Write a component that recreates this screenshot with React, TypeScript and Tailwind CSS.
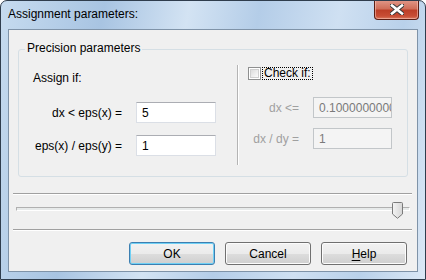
import React from "react";

const font = { fontFamily: '"Liberation Sans", Arial, sans-serif' };

const WinButton = ({
  children,
  primary = false,
}: {
  children: React.ReactNode;
  primary?: boolean;
}) => (
  <button
    className={
      "w-[86px] h-[23px] rounded-[3px] border text-[12px] leading-none text-black bg-[linear-gradient(#f2f2f2_0%,#ebebeb_50%,#dddddd_51%,#cfcfcf_100%)] " +
      (primary
        ? "border-[#3c7fb1] shadow-[inset_0_0_0_1px_#6fd0f5]"
        : "border-[#707070] shadow-[inset_0_0_0_1px_#fcfcfc]")
    }
  >
    {children}
  </button>
);

const Field = ({
  value,
  width,
  disabled = false,
}: {
  value: string;
  width: string;
  disabled?: boolean;
}) => (
  <div
    className={
      "h-[21px] border pl-[5px] flex items-center overflow-hidden whitespace-nowrap text-[12px] " +
      width +
      (disabled
        ? " bg-[#f4f4f4] border-[#c2c6c9] text-[#7a7a7a]"
        : " bg-white border-[#dbdfe6] border-t-[#abadb3] text-black")
    }
  >
    {value}
  </div>
);

const Separator = () => (
  <div className="ml-[4px] mr-[5px]">
    <div className="h-px bg-[#a0a0a0]" />
    <div className="h-px bg-white" />
  </div>
);

export default function App() {
  return (
    <div
      style={font}
      className="w-[426px] h-[280px] flex flex-col border border-[#2f3d4d] rounded-t-[7px] overflow-hidden bg-[linear-gradient(100deg,#c6dbef_0%,#a8c4e2_22%,#d3e3f3_40%,#b4cde8_55%,#cfe0f2_72%,#b9d1ea_86%,#dbe8f6_100%)]"
    >
      {/* title bar */}
      <div className="h-[28px] flex items-start shrink-0">
        <span className="ml-[7px] mt-[6px] text-[12px] leading-[15px] text-black">
          Assignment parameters:
        </span>
        <div className="ml-auto mr-[6px] -mt-px w-[45px] h-[20px] rounded-b-[4px] border border-[#5b1e14] border-t-0 bg-[linear-gradient(#e2998a_0%,#d06f5a_45%,#bd3f28_55%,#c84e35_85%,#d97a60_100%)] shadow-[inset_0_0_0_1px_rgba(255,210,200,0.5)] flex items-center justify-center">
          <svg width="14" height="11" viewBox="0 0 14 11">
            <path d="M2 1.5 L12 9.5 M12 1.5 L2 9.5" stroke="#3a3a3a" strokeWidth="4.6" strokeLinecap="square" />
            <path d="M2 1.5 L12 9.5 M12 1.5 L2 9.5" stroke="#ffffff" strokeWidth="2.6" strokeLinecap="square" />
          </svg>
        </div>
      </div>

      {/* client area */}
      <div className="mx-[7px] h-[243px] border border-[#7f93a8] bg-[#f0f0f0] flex flex-col text-[12px] text-black">
        {/* group box */}
        <div className="relative mt-[19px] ml-[9px] mr-[9px] h-[128px] border border-[#d5dfe5] rounded-[3px] flex">
          <span className="absolute left-[6px] -top-[9px] px-[2px] bg-[#f0f0f0] leading-[15px]">
            Precision parameters
          </span>

          {/* left column */}
          <div className="w-[218px] pl-[14px] flex flex-col">
            <div className="mt-[21px] leading-[15px]">Assign if:</div>
            <div className="mt-[16px] flex items-center gap-[14px]">
              <span className="w-[89px] text-right whitespace-nowrap">dx &lt; eps(x) =</span>
              <Field value="5" width="w-[80px]" />
            </div>
            <div className="mt-[12px] flex items-center gap-[14px]">
              <span className="w-[89px] text-right whitespace-nowrap">eps(x) / eps(y) =</span>
              <Field value="1" width="w-[80px]" />
            </div>
          </div>

          {/* divider */}
          <div className="mt-[15px] h-[100px] w-px bg-[#b4b4b4] border-r border-white box-content" />

          {/* right column */}
          <div className="flex-1 pl-[9px] flex flex-col">
            <div className="mt-[17px] flex items-center">
              <div className="w-[13px] h-[13px] border border-[#8e8f8f] bg-white p-px">
                <div className="w-full h-full border border-[#cfcfcf] bg-[linear-gradient(135deg,#dcdcdc,#fbfbfb)]" />
              </div>
              <span className="ml-px px-px h-[13px] leading-[11px] border border-dotted border-black whitespace-nowrap">
                Check if:
              </span>
            </div>
            <div className="mt-[17px] flex items-center gap-[14px] -ml-[9px]">
              <span className="w-[60px] text-right text-[#a0a0a0]">dx &lt;=</span>
              <Field value="0.10000000000000001" width="w-[79px]" disabled />
            </div>
            <div className="mt-[10px] flex items-center gap-[14px] -ml-[9px]">
              <span className="w-[60px] text-right text-[#a0a0a0] whitespace-nowrap">dx / dy =</span>
              <Field value="1" width="w-[79px]" disabled />
            </div>
          </div>
        </div>

        <div className="mt-[16px]">
          <Separator />
        </div>

        {/* slider */}
        <div className="relative mt-[7px] ml-[7px] mr-[7px] h-[17px]">
          <div className="absolute left-0 right-0 top-[5px] h-[4px] border border-[#b0b0b0] border-b-white border-r-white bg-[#e7eaea]" />
          <svg className="absolute right-[7px] top-0" width="11" height="17" viewBox="0 0 11 17">
            <defs>
              <linearGradient id="thumb" x1="0" x2="1" y1="0" y2="0">
                <stop offset="0" stopColor="#f4f4f4" />
                <stop offset="1" stopColor="#d6d6d6" />
              </linearGradient>
            </defs>
            <path
              d="M1.5 0.5 H9.5 Q10.5 0.5 10.5 1.5 V12 L5.5 16.3 L0.5 12 V1.5 Q0.5 0.5 1.5 0.5 Z"
              fill="url(#thumb)"
              stroke="#7a7a7a"
            />
          </svg>
        </div>

        <div className="mt-[10px]">
          <Separator />
        </div>

        {/* buttons */}
        <div className="mt-[11px] pr-[10px] flex justify-end gap-[10px]">
          <WinButton primary>OK</WinButton>
          <WinButton>Cancel</WinButton>
          <WinButton>
            <span className="underline underline-offset-2">H</span>elp
          </WinButton>
        </div>
      </div>
    </div>
  );
}
